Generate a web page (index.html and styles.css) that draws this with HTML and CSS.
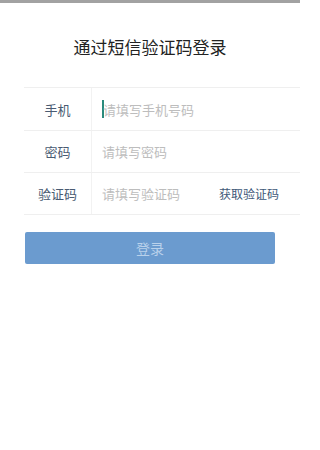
FILE: index.html
```html
<!DOCTYPE html>
<html lang="zh-CN">
<head>
<meta charset="utf-8">
<title>通过短信验证码登录</title>
<link rel="stylesheet" href="styles.css">
</head>
<body>
<div class="page">
  <div class="topbar"></div>
  <h1 class="title">通过短信验证码登录</h1>
  <div class="form">
    <div class="row">
      <div class="label">手机</div>
      <div class="field"><span class="caret"></span><span class="ph">请填写手机号码</span></div>
    </div>
    <div class="row">
      <div class="label">密码</div>
      <div class="field"><span class="ph">请填写密码</span></div>
    </div>
    <div class="row">
      <div class="label">验证码</div>
      <div class="field"><span class="ph">请填写验证码</span></div>
      <div class="getcode">获取验证码</div>
    </div>
  </div>
  <div class="btn">登录</div>
</div>
</body>
</html>
```
FILE: styles.css
```css
html, body {
  margin: 0;
  padding: 0;
  background: #fff;
  font-family: "Noto Sans CJK SC", "Noto Sans", sans-serif;
}
.page {
  width: 300px;
}
.topbar {
  height: 3px;
  background: #a2a2a2;
}
.title {
  margin: 32px 0 0;
  height: 24px;
  line-height: 24px;
  font-size: 17px;
  font-weight: normal;
  color: #222;
  text-align: center;
}
.form {
  margin: 28px 0 0 24px;
  border-top: 1px solid #efefef;
}
.row {
  display: flex;
  align-items: stretch;
  height: 41px;
  border-bottom: 1px solid #efefef;
}
.row:first-child {
  height: 42px;
}
.label {
  width: 67px;
  flex: none;
  border-right: 1px solid #f2f2f2;
  display: flex;
  align-items: center;
  justify-content: center;
  font-size: 13px;
  color: #4a5b72;
}
.field {
  flex: 1;
  display: flex;
  align-items: center;
  padding-left: 10px;
  font-size: 13px;
}
.ph {
  color: #bdbdbd;
}
.caret {
  width: 2px;
  height: 18px;
  margin-right: -1px;
  background: #2a8a7c;
  flex: none;
}
.getcode {
  display: flex;
  align-items: center;
  padding-right: 21px;
  font-size: 12px;
  color: #3e5878;
}
.btn {
  margin: 17px 25px 0;
  height: 32px;
  line-height: 32px;
  background: #6b9bcf;
  border-radius: 2px;
  text-align: center;
  color: #b9d1eb;
  font-size: 14px;
}
```
